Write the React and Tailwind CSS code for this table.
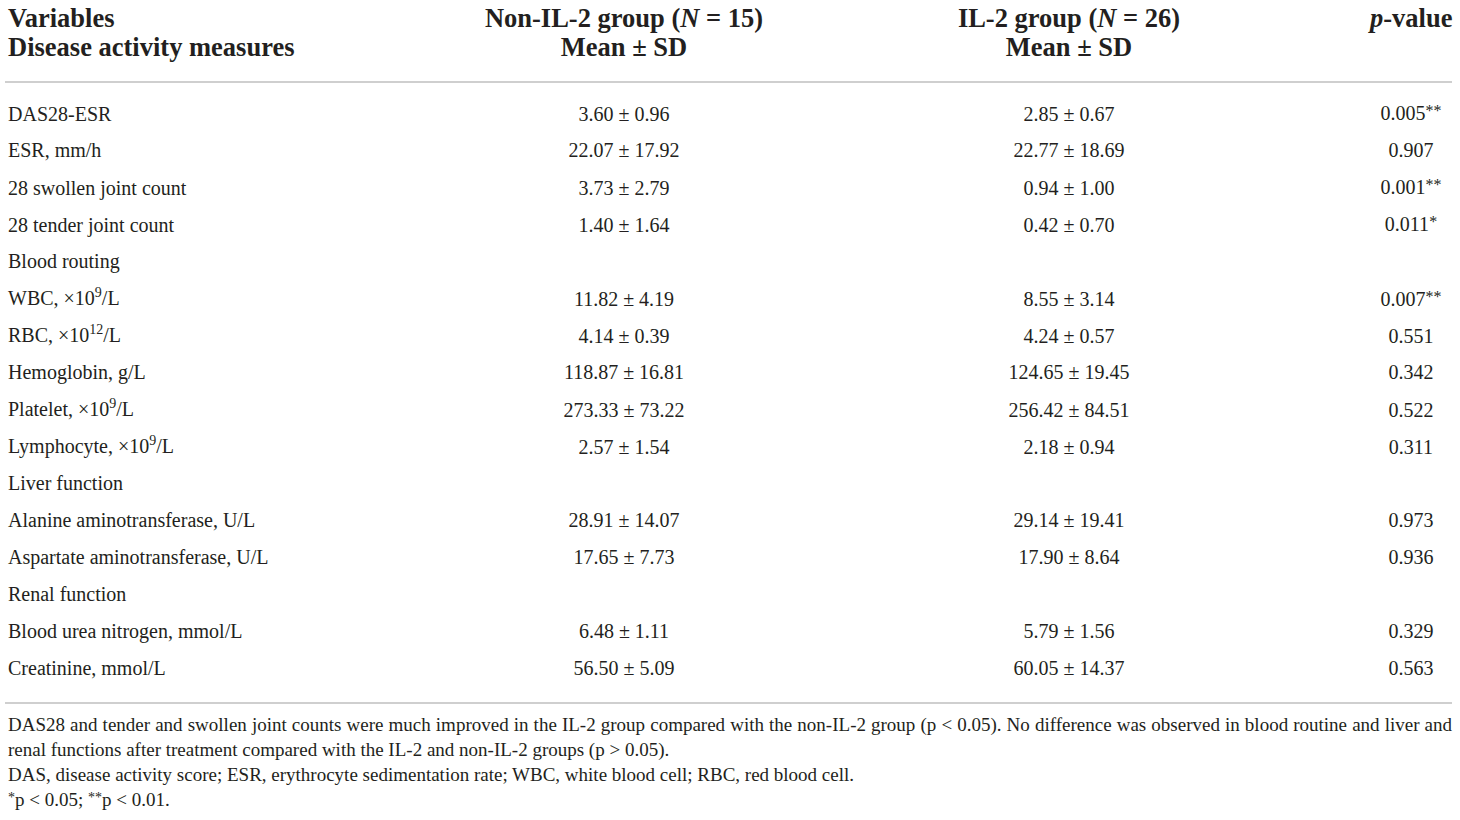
import React from "react";

const rows = [
  { label: "DAS28-ESR", a: "3.60 ± 0.96", b: "2.85 ± 0.67", p: "0.005", s: "**" },
  { label: "ESR, mm/h", a: "22.07 ± 17.92", b: "22.77 ± 18.69", p: "0.907" },
  { label: "28 swollen joint count", a: "3.73 ± 2.79", b: "0.94 ± 1.00", p: "0.001", s: "**" },
  { label: "28 tender joint count", a: "1.40 ± 1.64", b: "0.42 ± 0.70", p: "0.011", s: "*" },
  { label: "Blood routing", section: true },
  { label: ["WBC, ×10", "9", "/L"], a: "11.82 ± 4.19", b: "8.55 ± 3.14", p: "0.007", s: "**" },
  { label: ["RBC, ×10", "12", "/L"], a: "4.14 ± 0.39", b: "4.24 ± 0.57", p: "0.551" },
  { label: "Hemoglobin, g/L", a: "118.87 ± 16.81", b: "124.65 ± 19.45", p: "0.342" },
  { label: ["Platelet, ×10", "9", "/L"], a: "273.33 ± 73.22", b: "256.42 ± 84.51", p: "0.522" },
  { label: ["Lymphocyte, ×10", "9", "/L"], a: "2.57 ± 1.54", b: "2.18 ± 0.94", p: "0.311" },
  { label: "Liver function", section: true },
  { label: "Alanine aminotransferase, U/L", a: "28.91 ± 14.07", b: "29.14 ± 19.41", p: "0.973" },
  { label: "Aspartate aminotransferase, U/L", a: "17.65 ± 7.73", b: "17.90 ± 8.64", p: "0.936" },
  { label: "Renal function", section: true },
  { label: "Blood urea nitrogen, mmol/L", a: "6.48 ± 1.11", b: "5.79 ± 1.56", p: "0.329" },
  { label: "Creatinine, mmol/L", a: "56.50 ± 5.09", b: "60.05 ± 14.37", p: "0.563" },
];

function Label({ label }) {
  if (Array.isArray(label)) {
    return (
      <span>
        {label[0]}
        <span className="text-[14px] relative top-[-8px]">{label[1]}</span>
        {label[2]}
      </span>
    );
  }
  return <span>{label}</span>;
}

const grid = "grid grid-cols-[475px_288px_602px_82px]";

export default function App() {
  return (
    <div
      className="w-[1460px] h-[820px] bg-white text-[#231f20] overflow-hidden"
      style={{ fontFamily: '"Liberation Serif", "Times New Roman", serif' }}
    >
      <div className="ml-[5px] w-[1447px]">
        <div className={`${grid} pt-[4px] pb-[19px] font-bold text-[26.5px] leading-[29px]`}>
          <div className="pl-[3px] whitespace-nowrap">
            <div>Variables</div>
            <div>Disease activity measures</div>
          </div>
          <div className="text-center">
            <div className="whitespace-nowrap">
              Non-IL-2 group (<i>N</i> = 15)
            </div>
            <div>Mean ± SD</div>
          </div>
          <div className="text-center">
            <div className="whitespace-nowrap">
              IL-2 group (<i>N</i> = 26)
            </div>
            <div>Mean ± SD</div>
          </div>
          <div className="text-right whitespace-nowrap">
            <i>p</i>-value
          </div>
        </div>
        <div className="border-t-2 border-[#cfcfcf]" />
        <div className="pt-[12px] pb-[15px] text-[20px]">
          {rows.map((r, i) => (
            <div key={i} className={`${grid} h-[37px] items-center leading-[37px]`}>
              <div className="pl-[3px] whitespace-nowrap">
                <Label label={r.label} />
              </div>
              <div className="text-center">{r.a || ""}</div>
              <div className="text-center">{r.b || ""}</div>
              <div className="text-center">
                {r.p ? (
                  <span className="whitespace-nowrap">
                    {r.p}
                    {r.s ? (
                      <span className="text-[16px] relative top-[-4px]">{r.s}</span>
                    ) : null}
                  </span>
                ) : null}
              </div>
            </div>
          ))}
        </div>
        <div className="border-t-2 border-[#cfcfcf]" />
        <div className="pt-[8px] pl-[3px] text-[19px] leading-[25px]">
          <div className="whitespace-nowrap text-justify [text-align-last:justify] w-[1444px]">
            DAS28 and tender and swollen joint counts were much improved in the IL-2 group compared with the non-IL-2 group (p &lt; 0.05). No difference was observed in blood routine and liver and
          </div>
          <div className="whitespace-nowrap">
            renal functions after treatment compared with the IL-2 and non-IL-2 groups (p &gt; 0.05).
          </div>
          <div className="whitespace-nowrap">
            DAS, disease activity score; ESR, erythrocyte sedimentation rate; WBC, white blood cell; RBC, red blood cell.
          </div>
          <div className="whitespace-nowrap">
            <span className="text-[14px] relative top-[-4px]">*</span>p &lt; 0.05;{" "}
            <span className="text-[14px] relative top-[-4px]">**</span>p &lt; 0.01.
          </div>
        </div>
      </div>
    </div>
  );
}
